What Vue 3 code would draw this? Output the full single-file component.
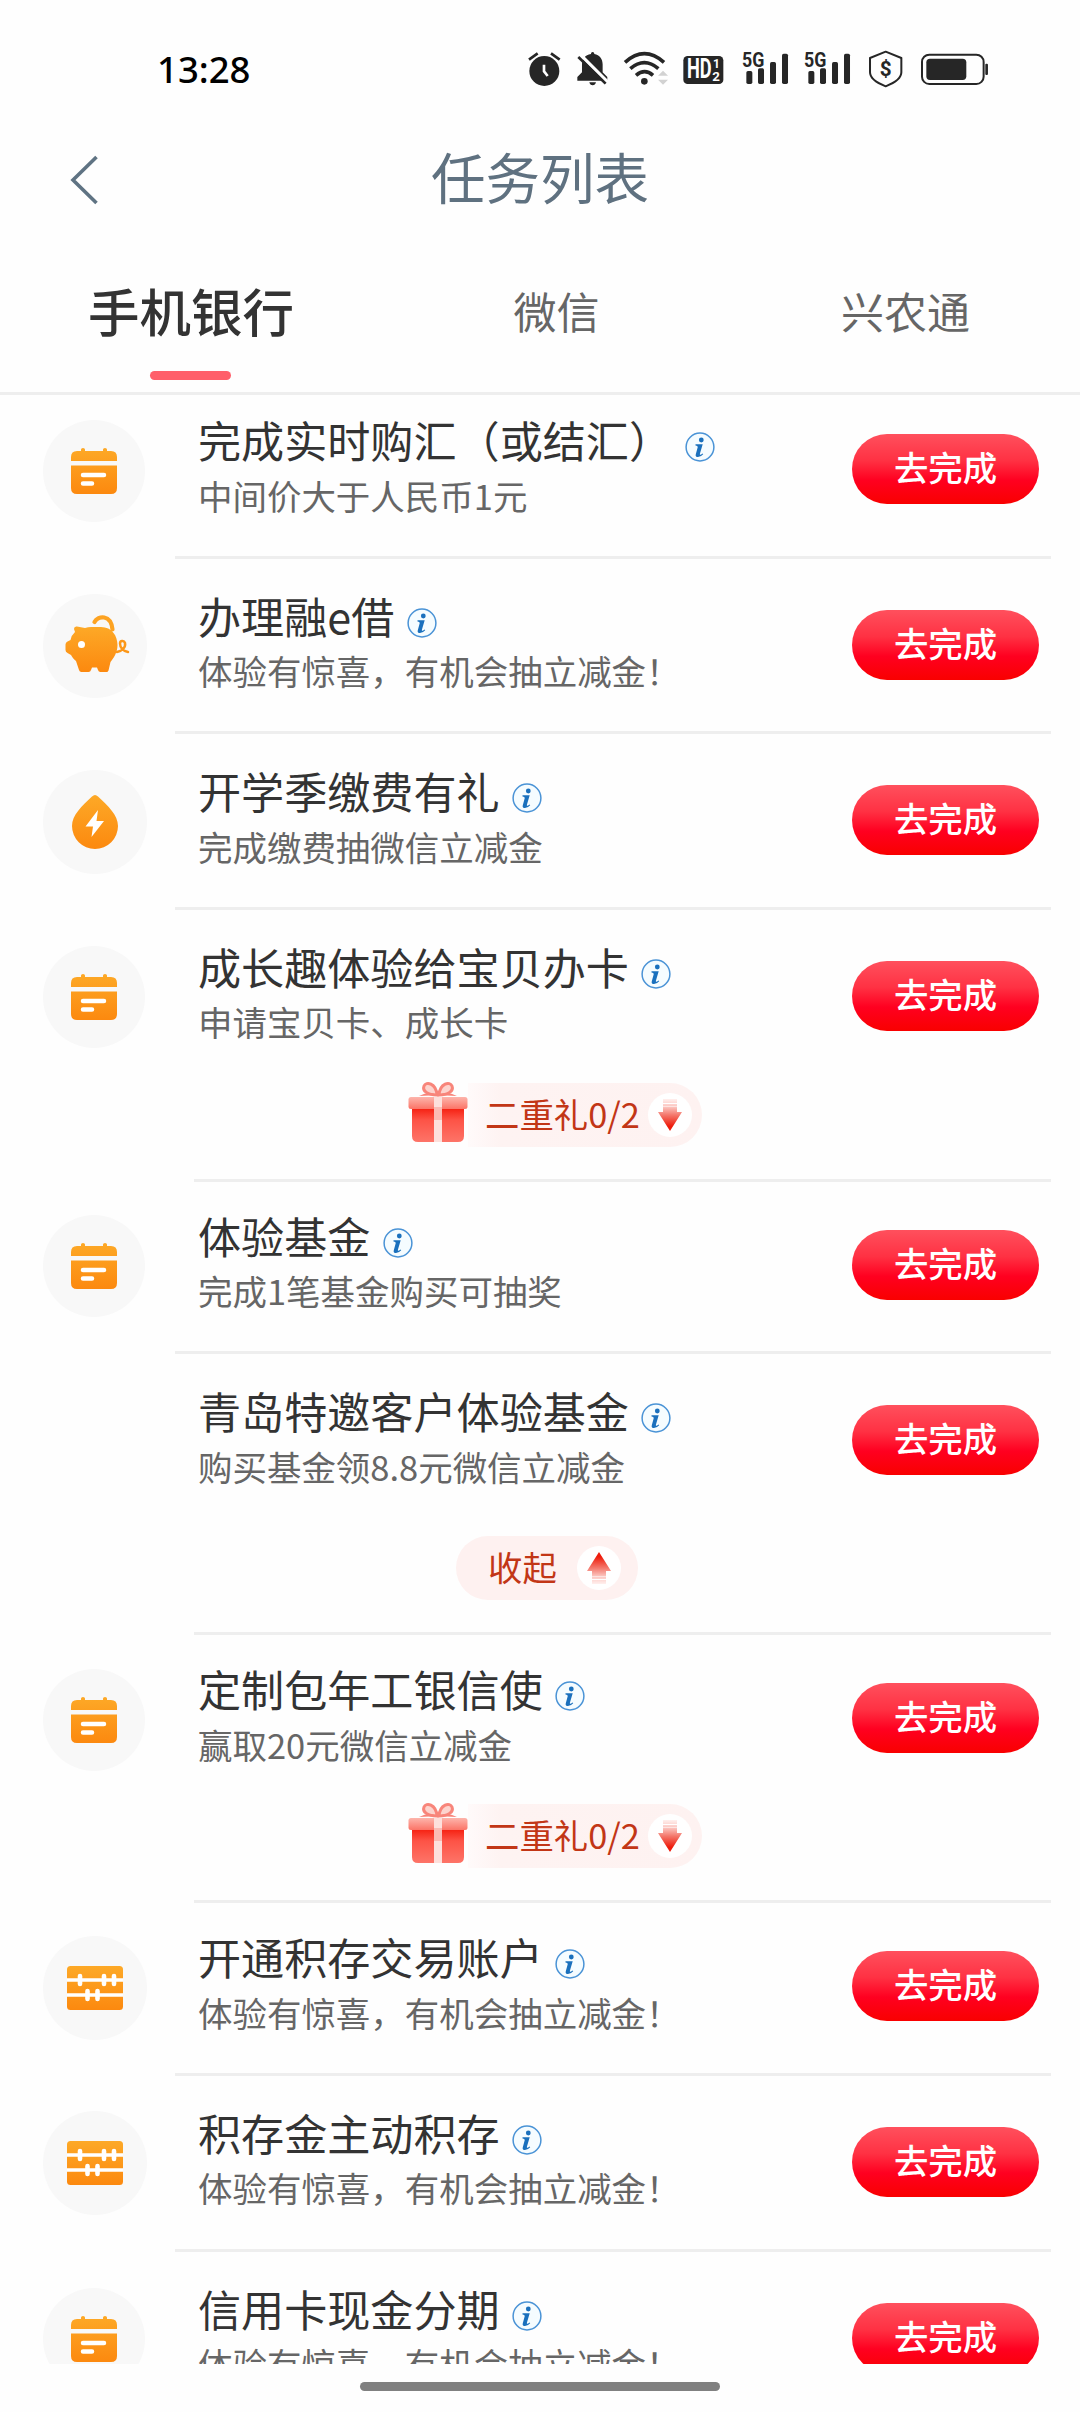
<script setup>
const tabs = ['手机银行', '微信', '兴农通']

const tasks = [
  { icon: 'calendar', title: '完成实时购汇（或结汇）', desc: '中间价大于人民币1元', lead: 'first' },
  { icon: 'pig', title: '办理融e借', desc: '体验有惊喜，有机会抽立减金！' },
  { icon: 'drop', title: '开学季缴费有礼', desc: '完成缴费抽微信立减金' },
  { icon: 'calendar', title: '成长趣体验给宝贝办卡', desc: '申请宝贝卡、成长卡', extra: 'gift' },
  { icon: 'calendar', title: '体验基金', desc: '完成1笔基金购买可抽奖', lead: 'tight' },
  { icon: '', title: '青岛特邀客户体验基金', desc: '购买基金领8.8元微信立减金', extra: 'fold' },
  { icon: 'calendar', title: '定制包年工银信使', desc: '赢取20元微信立减金', extra: 'gift', lead: 'tight' },
  { icon: 'abacus', title: '开通积存交易账户', desc: '体验有惊喜，有机会抽立减金！', lead: 'tight' },
  { icon: 'abacus', title: '积存金主动积存', desc: '体验有惊喜，有机会抽立减金！' },
  { icon: 'calendar', title: '信用卡现金分期', desc: '体验有惊喜，有机会抽立减金！' },
]
</script>

<template>
  <div class="screen">
    <svg class="defs" width="0" height="0" aria-hidden="true">
      <defs>
        <linearGradient id="orange" x1="0" y1="0" x2="0" y2="1">
          <stop offset="0" stop-color="#fda927" />
          <stop offset="1" stop-color="#fc890f" />
        </linearGradient>
        <linearGradient id="boxRed" x1="0" y1="0" x2="0" y2="1">
          <stop offset="0" stop-color="#f51f10" />
          <stop offset="0.35" stop-color="#fd5346" />
          <stop offset="1" stop-color="#fd7468" />
        </linearGradient>
        <linearGradient id="lidRed" x1="0" y1="0" x2="0" y2="1">
          <stop offset="0" stop-color="#fdb5ac" />
          <stop offset="1" stop-color="#fb7467" />
        </linearGradient>
        <linearGradient id="arrowRed" x1="0" y1="0" x2="0" y2="1">
          <stop offset="0" stop-color="#fff0ee" />
          <stop offset="0.25" stop-color="#fbc4be" />
          <stop offset="0.5" stop-color="#f4786c" />
          <stop offset="0.85" stop-color="#ee1c0c" />
          <stop offset="1" stop-color="#ee1c0c" />
        </linearGradient>
      </defs>
    </svg>

    <header class="status">
      <span class="clock">13:28</span>
      <div class="status-icons">
        <svg width="33" height="37" viewBox="83 60 99 111">
          <circle cx="132" cy="123" r="45" />
          <path d="M86 89l26-19M178 89l-26-19" stroke="#262626" stroke-width="8" />
          <path d="M131 104v20l11 14" fill="none" stroke="#fff" stroke-width="8" />
        </svg>
        <svg width="31.3" height="37" viewBox="230 60 94 111">
          <path d="M277 66c3 0 5 2 5 6 16 3 25 15 25 31v24l14 14v11H231v-11l14-14v-24c0-16 9-28 27-31 0-4 2-6 5-6zM267 157h20q-2 9-10 9t-10-9z" />
          <path d="M240 74l84 84" stroke="#fff" stroke-width="10" />
          <path d="M234 81l82 80" stroke="#262626" stroke-width="8" />
        </svg>
        <svg width="42.7" height="37" viewBox="372 60 128 111">
          <g fill="none" stroke="#262626" stroke-width="11">
            <path d="M375 97q58-52 117 0" />
            <path d="M391 116q42-36 84 0" />
            <path d="M408 136q26-22 51 0" />
          </g>
          <circle cx="433" cy="154" r="10" />
          <path d="M474 137l15-15 15 15zM474 149h30l-15 15z" fill="#d2d2d2" />
        </svg>
        <svg width="43" height="37" viewBox="548 60 129 111">
          <rect x="549" y="78" width="120" height="84" rx="13" />
          <text x="560" y="144" font-size="84" font-weight="700" fill="#fff" textLength="74" lengthAdjust="spacingAndGlyphs">HD</text>
          <text x="638" y="115" font-size="36" font-weight="700" fill="#fff">1</text>
          <text x="636" y="153" font-size="40" font-weight="700" fill="#fff">2</text>
        </svg>
        <svg v-for="n in 2" :key="n" :width="n === 1 ? 46.7 : 48.7" height="37" :viewBox="n === 1 ? '725 60 140 111' : '725 60 146 111'">
          <rect x="738" y="123" width="18" height="39" rx="5" />
          <rect x="773" y="115" width="18" height="47" rx="5" />
          <rect x="809" y="96" width="18" height="66" rx="5" />
          <rect x="845" y="71" width="18" height="91" rx="5" />
          <text x="725" y="110" font-size="62" font-weight="700" stroke="#fff" stroke-width="5" paint-order="stroke" textLength="67" lengthAdjust="spacingAndGlyphs">5G</text>
        </svg>
        <svg width="35.7" height="37" viewBox="1107 60 107 111">
          <path d="M1157 65l47 19v43q0 24-47 42-47-18-47-42v-43z" fill="none" stroke="#262626" stroke-width="6" stroke-linejoin="round" />
          <text x="1157" y="138" font-size="62" font-weight="700" text-anchor="middle">$</text>
        </svg>
        <svg width="67.3" height="37" viewBox="1262 60 202 111">
          <rect x="1265" y="74" width="185" height="88" rx="22" fill="none" stroke="#262626" stroke-width="6" />
          <rect x="1278" y="86" width="120" height="64" rx="11" />
          <rect x="1455" y="101" width="8" height="34" rx="3" />
        </svg>
      </div>
    </header>

    <nav class="navbar">
      <svg class="back" width="30" height="52" viewBox="0 0 30 52">
        <path d="M26.5 3L3 26l23.500 23" fill="none" stroke="#5f7383" stroke-width="3.600" />
      </svg>
      <h1>任务列表</h1>
    </nav>

    <div class="tabs">
      <div v-for="(tab, i) in tabs" :key="tab" class="tab" :class="{ active: i === 0 }">{{ tab }}</div>
    </div>

    <main class="list">
      <section v-for="(task, i) in tasks" :key="i" class="task" :class="[task.lead, task.extra]">
        <div class="task-main">
          <div class="icon-cell">
            <div v-if="task.icon" class="disc" :class="task.icon">
              <svg v-if="task.icon === 'calendar'" width="46" height="46" viewBox="0 0 46 46">
                <path d="M0 13V9q0-6 6-6h4V1.500q0-1.500 2-1.500t2 1.500V3h18V1.500q0-1.500 2-1.500t2 1.500V3h4q6 0 6 6v4zM0 17.500h46V40q0 6-6 6H6q-6 0-6-6z" fill="url(#orange)" />
                <path d="M12 27h21M12 35.500h9" stroke="#fff" stroke-width="4.500" stroke-linecap="round" />
              </svg>
              <svg v-else-if="task.icon === 'pig'" width="104" height="104" viewBox="0 0 104 104">
                <path d="M31 35q0-3 3-2.500l8 1.500q3-1 6-1h10c11 0 16.500 9 16.500 18 0 8-4 13-7 17l-2 8.500q-.5 1.500-2 1.500h-6q-2 0-2.500-2l-1-2.500h-5l-1 2.500q-.5 2-2.500 2h-7q-2 0-2.500-2l-3-9c-2-1.500-4-4-5-6l-3.500-2q-2-1-2-3v-5.500q0-2 2-3l3-1.500q1-5 4.500-8z" fill="url(#orange)" />
                <path d="M51.500 28C55 21.500 68 20 69.500 35.500" fill="none" stroke="#fda322" stroke-width="4.200" stroke-linecap="round" />
                <path d="M74 58c5-1 9-5 8-9-1-3-5-2.500-5 .5 0 4 3 7.500 8 8.500" fill="none" stroke="#fc9718" stroke-width="2.500" stroke-linecap="round" />
                <circle cx="38.500" cy="50.500" r="3.500" fill="#fff" />
              </svg>
              <svg v-else-if="task.icon === 'drop'" width="46" height="54" viewBox="0 0 46 54">
                <path d="M20 1.500q3-3 6 0C36 11 46 20 46 31a23 23 0 0 1-46 0C0 20 10 11 20 1.500z" fill="url(#orange)" />
                <path d="M26 15L13.500 31.500H21L19.500 42 32 26h-7.500z" fill="#fff" />
              </svg>
              <svg v-else width="56" height="44" viewBox="0 0 56 44">
                <rect width="56" height="44" rx="3.500" fill="url(#orange)" />
                <path d="M0 14h56M0 29h56" stroke="#fff" stroke-width="3.600" />
                <path d="M13 10v8M37 10v8M47 10v8M20.500 25v8M30.500 25v8" stroke="#fff" stroke-width="4.600" stroke-linecap="round" />
              </svg>
            </div>
          </div>
          <div class="copy">
            <div class="title">
              <span>{{ task.title }}</span>
              <svg class="info" width="30" height="30" viewBox="0 0 30 30">
                <circle cx="15" cy="15" r="13.900" fill="#f5fcff" stroke="#4a93d6" stroke-width="1.500" />
                <circle cx="16.300" cy="8" r="2.400" fill="#1a70bd" />
                <path d="M10.500 12.300h7.200l-2.800 9.500q-.3 1.300.8.9l2-1.200.5.7q-2.500 2.800-5.200 2.800-3 0-2.200-2.800l1.900-7q.3-1.500-2.200-1.700z" fill="#1a70bd" />
              </svg>
            </div>
            <div class="desc">{{ task.desc }}</div>
          </div>
          <button class="go">去完成</button>
        </div>

        <div v-if="task.extra === 'gift'" class="extra">
          <div class="gift-bar">
            <svg class="gift-box" width="60" height="62" viewBox="0 0 60 62">
              <path d="M4 27h52v28q0 6-6 6H10q-6 0-6-6z" fill="url(#boxRed)" />
              <rect x="0.500" y="16" width="59" height="12" rx="2.500" fill="url(#lidRed)" />
              <rect x="26" y="16" width="8" height="45" fill="#fde0dc" />
              <rect x="26" y="26" width="8" height="13" fill="#fa9d94" opacity=".55" />
              <g fill="#fdd3cd" stroke="#f8857a" stroke-width="3">
                <path d="M29 14C20 14 14 10 16 5c2-5 12-3 13 9z" />
                <path d="M31 14c9 0 15-4 13-9-2-5-12-3-13 9z" />
              </g>
              <path d="M28 13q-8-3-17 2l11-.5zM32 13q8-3 17 2l-11-.5z" fill="#f8857a" />
            </svg>
            <div class="pill half">
              <span>二重礼0/2</span>
              <i class="dot"><svg width="24" height="32" viewBox="0 0 24 32"><path d="M5 0h14v4H5zM5 5h14v2.500H5zM5 8h14v5h5L12 32 0 13h5z" fill="url(#arrowRed)" /></svg></i>
            </div>
          </div>
        </div>
        <div v-else-if="task.extra === 'fold'" class="extra">
          <div class="pill full">
            <span>收起</span>
            <i class="dot up"><svg width="24" height="32" viewBox="0 0 24 32"><path d="M5 0h14v4H5zM5 5h14v2.500H5zM5 8h14v5h5L12 32 0 13h5z" fill="url(#arrowRed)" /></svg></i>
          </div>
        </div>
        <div class="line"></div>
      </section>
    </main>

    <footer class="home"><span></span></footer>
  </div>
</template>

<style>
body {
  background: #fefefe;
}
</style>

<style scoped>
.screen {
  width: 1080px;
  height: 2412px;
  display: flex;
  flex-direction: column;
  overflow: hidden;
  background: #fefefe;
  font-family: "Noto Sans CJK SC", "Noto Sans", sans-serif;
  color: #333;
}
.screen * {
  box-sizing: border-box;
}
.defs {
  position: absolute;
}
.status {
  height: 130px;
  flex: none;
  display: flex;
  align-items: flex-start;
  padding-left: 157px;
}
.clock {
  width: 370.700px;
  margin-top: 44px;
  font: 500 36.500px/50px "Noto Sans", sans-serif;
  color: #000;
}
.status-icons {
  display: flex;
  gap: 16px;
  margin-top: 50px;
}
.status-icons svg {
  display: block;
  overflow: visible;
  fill: #262626;
  font-family: Roboto, sans-serif;
}
.navbar {
  height: 100px;
  flex: none;
  display: flex;
  align-items: center;
  padding: 0 70px;
}
.navbar h1 {
  flex: 1;
  margin: 0 30px 8px 0;
  text-align: center;
  font-size: 54.500px;
  line-height: 80px;
  font-weight: 400;
  color: #5f7180;
}
.tabs {
  height: 165px;
  flex: none;
  display: grid;
  grid-template-columns: 382px 349px 1fr;
  justify-items: center;
  padding-top: 42px;
  border-bottom: 3px solid #eee;
}
.tab {
  font-size: 43px;
  line-height: 76px;
  color: #666;
}
.tab.active {
  display: flex;
  flex-direction: column;
  align-items: center;
  font-size: 51.500px;
  font-weight: 500;
  color: #333;
}
.tab.active::after {
  content: "";
  width: 81px;
  height: 9px;
  margin-top: 23px;
  border-radius: 5px;
  background: #ff5f6a;
}
.list {
  height: 1969px;
  flex: none;
  overflow: hidden;
}
.task {
  padding-top: 34px;
}
.task.first {
  padding-top: 22px;
}
.task.tight {
  padding-top: 31px;
}
.task-main {
  height: 104px;
  display: flex;
  align-items: center;
  padding-right: 41px;
}
.icon-cell {
  width: 198px;
  flex: none;
  padding: 3px 0 0 43px;
}
.disc {
  width: 104px;
  height: 104px;
  border-radius: 50%;
  display: flex;
  align-items: center;
  justify-content: center;
  background: #f8f8f8;
}
.disc.calendar {
  width: 102px;
  height: 102px;
}
.copy {
  flex: 1;
  padding-bottom: 10px;
}
.title {
  display: flex;
  align-items: center;
  gap: 12.500px;
  height: 61px;
  font-size: 43.100px;
  line-height: 60px;
  white-space: nowrap;
}
.title span {
  margin-top: -2px;
}
.info {
  margin-top: 14px;
}
.desc {
  height: 48px;
  font-size: 34.480px;
  line-height: 48px;
  color: #666;
  white-space: nowrap;
}
.go {
  width: 187px;
  height: 70px;
  flex: none;
  border: 0;
  padding: 0 0 5px;
  border-radius: 35px;
  background: linear-gradient(#ff505d, #ff3143 38%, #ff0020 66%, #f90000);
  color: #fff;
  font: 500 34.400px/65px "Noto Sans CJK SC", sans-serif;
}
.line {
  height: 3px;
  margin: 34.600px 29px 0 175px;
  background: #eee;
}
.gift .line,
.fold .line {
  margin-top: 32px;
  margin-left: 194px;
}
.extra {
  padding-top: 35px;
}
.tight .extra {
  padding-top: 34px;
}
.fold .extra {
  padding-top: 44px;
}
.gift-bar {
  display: flex;
  height: 64px;
  margin-left: 408px;
}
.gift-box {
  margin-top: -2px;
}
.pill {
  display: flex;
  align-items: center;
  justify-content: space-between;
  height: 64px;
  font-size: 34.400px;
  line-height: 60px;
  color: #c23616;
}
.pill span {
  padding-bottom: 4px;
}
.pill.half {
  width: 234px;
  padding: 0 10px 0 17px;
  border-radius: 0 32px 32px 0;
  background: linear-gradient(90deg, #fffafa, #fef3f2 14%, #fef2f1);
}
.pill.full {
  width: 182px;
  margin-left: 456px;
  padding: 0 17px 0 32px;
  border-radius: 32px;
  background: #fef1f0;
}
.dot {
  width: 44px;
  height: 44px;
  border-radius: 50%;
  display: flex;
  align-items: center;
  justify-content: center;
  background: #fff;
}
.dot.up {
  transform: rotate(180deg);
}
.home {
  flex: 1;
  display: flex;
  justify-content: center;
  padding-top: 18px;
}
.home span {
  width: 360px;
  height: 9px;
  border-radius: 5px;
  background: #808080;
}
</style>
